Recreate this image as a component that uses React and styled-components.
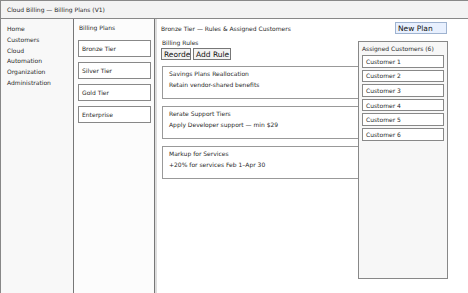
import React from "react";
import styled, { createGlobalStyle } from "styled-components";

const Global = createGlobalStyle`
  html, body { margin: 0; padding: 0; background: #fff; overflow: hidden; }
  body { font-family: "DejaVu Sans", sans-serif; color: #2a2a2a; }
`;

const Frame = styled.div`
  box-sizing: border-box;
  width: 480px;
  height: 294px;
  border: 1px solid #888;
  display: flex;
  flex-direction: column;
`;

const Header = styled.header`
  box-sizing: border-box;
  height: 18px;
  flex: none;
  background: #f3f3f3;
  border-bottom: 1px solid #888;
  display: flex;
  align-items: center;
  padding-left: 6px;
  font-size: 6px;
`;

const Body = styled.div`
  flex: 1;
  display: grid;
  grid-template-columns: 73px 81px 1fr;
  min-height: 0;
`;

const Sidebar = styled.nav`
  box-sizing: border-box;
  background: #f8f8f8;
  border-right: 1px solid #777;
  padding: 5px 0 0 6px;
  display: flex;
  flex-direction: column;
`;

const NavItem = styled.div`
  font-size: 6px;
  line-height: 10.8px;
`;

const PlansCol = styled.section`
  box-sizing: border-box;
  background: #fcfcfc;
  border-right: 1px solid #777;
  box-shadow: 2px 0 0 #ddd;
  padding: 4px 2px 0 4px;
  display: flex;
  flex-direction: column;
`;

const ColTitle = styled.div`
  font-size: 6px;
  line-height: 9px;
  padding-left: 1px;
  margin-bottom: 8px;
`;

const PlanList = styled.div`
  display: flex;
  flex-direction: column;
  gap: 5px;
`;

const PlanItem = styled.div`
  box-sizing: border-box;
  height: 17px;
  width: 73px;
  background: #fff;
  border: 1px solid #888;
  display: flex;
  align-items: center;
  padding-left: 3px;
  font-size: 6px;
`;

const Main = styled.main`
  position: relative;
  box-sizing: border-box;
  padding: 3px 32px 0 6px;
  display: flex;
  flex-direction: column;
`;

const TopRow = styled.div`
  display: flex;
  align-items: center;
  justify-content: space-between;
  height: 12px;
`;

const PageTitle = styled.div`
  font-size: 6px;
`;

const Button = styled.button`
  box-sizing: border-box;
  height: 12px;
  width: ${(p) => p.$w}px;
  padding: 0 0 0 2px;
  margin: 0;
  font-family: "DejaVu Sans", sans-serif;
  font-size: 7.5px;
  color: #111;
  text-align: left;
  white-space: nowrap;
  overflow: hidden;
  background: ${(p) => (p.$primary ? "#e8f0fe" : "#f3f3f3")};
  border: 1px solid ${(p) => (p.$primary ? "#9fb3d0" : "#777")};
  border-radius: 0;
`;

const Label = styled.div`
  font-size: 6px;
  line-height: 8px;
  margin-top: 5px;
  padding-left: 1px;
`;

const ButtonRow = styled.div`
  display: flex;
  gap: 2px;
  margin-top: 1px;
`;

const Rules = styled.div`
  display: flex;
  flex-direction: column;
  gap: 7px;
  margin: 6px 0 0 1px;
`;

const Card = styled.div`
  box-sizing: border-box;
  height: 33px;
  border: 1px solid #999;
  padding: 2px 6px;
  display: flex;
  flex-direction: column;
  gap: 2px;
  font-size: 6px;
  line-height: 9px;
`;

const Panel = styled.aside`
  position: absolute;
  top: 22px;
  right: 31px;
  box-sizing: border-box;
  width: 90px;
  height: 238px;
  background: #f7f7f7;
  border: 1px solid #888;
  padding: 2px 3px 0 3px;
  display: flex;
  flex-direction: column;
  z-index: 1;
`;

const PanelTitle = styled.div`
  font-size: 6px;
  line-height: 9px;
  margin-bottom: 2px;
`;

const CustomerList = styled.div`
  display: flex;
  flex-direction: column;
  gap: 2px;
`;

const Customer = styled.div`
  box-sizing: border-box;
  height: 12.6px;
  width: 82px;
  background: #fff;
  border: 1px solid #888;
  display: flex;
  align-items: center;
  padding-left: 3px;
  font-size: 6px;
`;

const nav = ["Home", "Customers", "Cloud", "Automation", "Organization", "Administration"];
const plans = ["Bronze Tier", "Silver Tier", "Gold Tier", "Enterprise"];
const rules = [
  ["Savings Plans Reallocation", "Retain vendor-shared benefits"],
  ["Rerate Support Tiers", "Apply Developer support — min $29"],
  ["Markup for Services", "+20% for services Feb 1–Apr 30"],
];
const customers = [1, 2, 3, 4, 5, 6].map((n) => `Customer ${n}`);

export default function App() {
  return (
    <>
      <Global />
      <Frame>
        <Header>Cloud Billing — Billing Plans (V1)</Header>
        <Body>
          <Sidebar>
            {nav.map((n) => (
              <NavItem key={n}>{n}</NavItem>
            ))}
          </Sidebar>
          <PlansCol>
            <ColTitle>Billing Plans</ColTitle>
            <PlanList>
              {plans.map((p) => (
                <PlanItem key={p}>{p}</PlanItem>
              ))}
            </PlanList>
          </PlansCol>
          <Main>
            <TopRow>
              <PageTitle>Bronze Tier — Rules &amp; Assigned Customers</PageTitle>
              <Button $primary $w={52}>New Plan</Button>
            </TopRow>
            <Label>Billing Rules</Label>
            <ButtonRow>
              <Button $w={30}>Reorder</Button>
              <Button $w={38}>Add Rule</Button>
            </ButtonRow>
            <Rules>
              {rules.map(([t, d]) => (
                <Card key={t}>
                  <div>{t}</div>
                  <div>{d}</div>
                </Card>
              ))}
            </Rules>
            <Panel>
              <PanelTitle>Assigned Customers (6)</PanelTitle>
              <CustomerList>
                {customers.map((c) => (
                  <Customer key={c}>{c}</Customer>
                ))}
              </CustomerList>
            </Panel>
          </Main>
        </Body>
      </Frame>
    </>
  );
}
